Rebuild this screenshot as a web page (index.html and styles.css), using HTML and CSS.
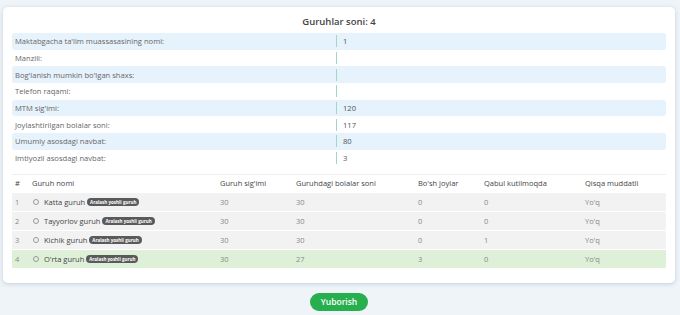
FILE: index.html
```html
<!DOCTYPE html>
<html>

<head>
    <title>Guruhlar</title>
    <link rel="stylesheet" href="styles.css">
</head>

<body>

    <div class="card">
        <h3 class="card-title">Guruhlar soni: 4</h3>

        <div class="info">
            <div class="info-row">
                <span class="info-label">Maktabgacha ta'lim muassasasining nomi:</span>
                <span class="info-value">1</span>
            </div>
            <div class="info-row">
                <span class="info-label">Manzili:</span>
                <span class="info-value"></span>
            </div>
            <div class="info-row">
                <span class="info-label">Bog'lanish mumkin bo'lgan shaxs:</span>
                <span class="info-value"></span>
            </div>
            <div class="info-row">
                <span class="info-label">Telefon raqami:</span>
                <span class="info-value"></span>
            </div>
            <div class="info-row">
                <span class="info-label">MTM sig'imi:</span>
                <span class="info-value">120</span>
            </div>
            <div class="info-row">
                <span class="info-label">Joylashtirilgan bolalar soni:</span>
                <span class="info-value">117</span>
            </div>
            <div class="info-row">
                <span class="info-label">Umumiy asosdagi navbat:</span>
                <span class="info-value">80</span>
            </div>
            <div class="info-row">
                <span class="info-label">Imtiyozli asosdagi navbat:</span>
                <span class="info-value">3</span>
            </div>
        </div>

        <table class="groups">
            <thead>
                <tr>
                    <th class="col-num">#</th>
                    <th class="col-name">Guruh nomi</th>
                    <th class="col-cap">Guruh sig'imi</th>
                    <th class="col-kids">Guruhdagi bolalar soni</th>
                    <th class="col-free">Bo'sh joylar</th>
                    <th class="col-wait">Qabul kutilmoqda</th>
                    <th>Qisqa muddatli</th>
                </tr>
            </thead>
            <tbody>
                <tr>
                    <td>1</td>
                    <td><span class="radio"></span>Katta guruh <span class="badge">Aralash yoshli guruh</span></td>
                    <td>30</td>
                    <td>30</td>
                    <td>0</td>
                    <td>0</td>
                    <td>Yo'q</td>
                </tr>
                <tr>
                    <td>2</td>
                    <td><span class="radio"></span>Tayyorlov guruh <span class="badge">Aralash yoshli guruh</span></td>
                    <td>30</td>
                    <td>30</td>
                    <td>0</td>
                    <td>0</td>
                    <td>Yo'q</td>
                </tr>
                <tr>
                    <td>3</td>
                    <td><span class="radio"></span>Kichik guruh <span class="badge">Aralash yoshli guruh</span></td>
                    <td>30</td>
                    <td>30</td>
                    <td>0</td>
                    <td>1</td>
                    <td>Yo'q</td>
                </tr>
                <tr class="selected">
                    <td>4</td>
                    <td><span class="radio"></span>O'rta guruh <span class="badge">Aralash yoshli guruh</span></td>
                    <td>30</td>
                    <td>27</td>
                    <td>3</td>
                    <td>0</td>
                    <td>Yo'q</td>
                </tr>
            </tbody>
        </table>
    </div>

    <div class="actions">
        <button class="btn-send">Yuborish</button>
    </div>

</body>

</html>
```

FILE: styles.css
```css
body {
    margin: 0;
    padding: 7px 5px 0 3px;
    background: #eef4f8;
    font-family: "Open Sans", sans-serif;
    color: #666;
}

.card {
    background: #fff;
    border-radius: 5px;
    box-shadow: 0 1px 4px rgba(120, 140, 160, 0.35);
    padding: 8px 9px 15px 9px;
}

.card-title {
    margin: 0 0 5px;
    text-align: center;
    font-size: 9.5px;
    font-weight: 600;
    color: #444;
    line-height: 13px;
}

.info-row {
    display: flex;
    height: 16.7px;
    align-items: center;
    font-size: 7.6px;
    border-radius: 3px;
}

.info-row:nth-child(odd) {
    background: #e6f2fc;
}

.info-label {
    width: 321px;
    padding-left: 3px;
}

.info-value {
    border-left: 1px solid #a3d6c4;
    height: 12px;
    line-height: 12px;
    padding-left: 6px;
    color: #555;
}

.groups {
    width: 100%;
    margin-top: 7px;
    border-collapse: collapse;
    font-size: 7.5px;
}

.groups th {
    text-align: left;
    font-weight: 400;
    color: #444;
    height: 17px;
    padding: 0 3px;
    border-top: 1px solid #eee;
}

.groups td {
    height: 18px;
    padding: 0 3px;
    background: #f2f2f2;
    border-top: 1px solid #fff;
    color: #888;
}

.groups td:nth-child(2) {
    color: #444;
}

.groups tr.selected td {
    background: #dff0d8;
}

.col-num {
    width: 11px;
}

.col-name {
    width: 182px;
}

.col-cap {
    width: 70px;
}

.col-kids {
    width: 116px;
}

.col-free {
    width: 60px;
}

.col-wait {
    width: 95px;
}

.radio {
    display: inline-block;
    width: 4px;
    height: 4px;
    border: 1px solid #999;
    border-radius: 50%;
    margin: 0 5px 0 1px;
    vertical-align: 0;
}

.badge {
    display: inline-block;
    background: #5a5a5a;
    color: #fff;
    font-size: 4.5px;
    font-weight: 700;
    line-height: 8px;
    padding: 0 3px;
    border-radius: 4px;
    vertical-align: 1px;
}

.actions {
    display: flex;
    justify-content: center;
    padding-top: 10px;
}

.btn-send {
    background: #27ae4f;
    color: #fff;
    border: none;
    border-radius: 10px;
    font-family: "Open Sans", sans-serif;
    font-size: 8.5px;
    font-weight: 600;
    padding: 0 11px;
    height: 18px;
}
```
